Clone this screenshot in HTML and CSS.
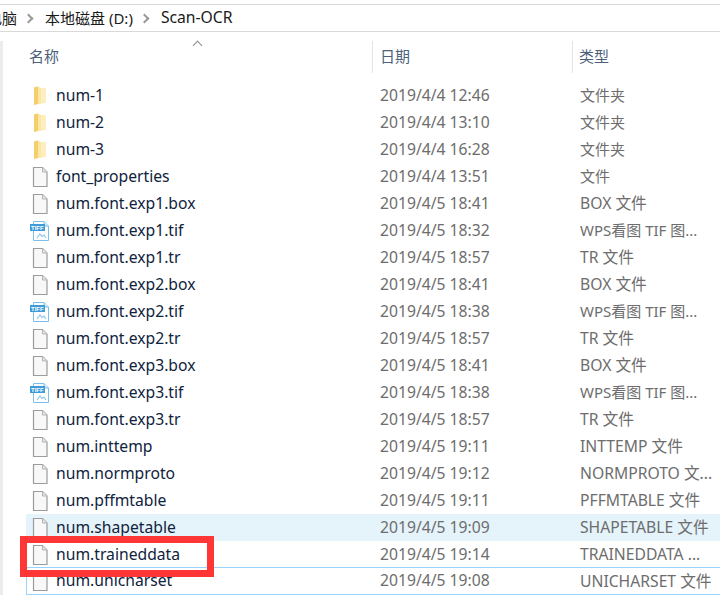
FILE: index.html
```html
<!DOCTYPE html>
<html lang="zh-CN">
<head>
  <meta charset="UTF-8" />
  <title>Scan-OCR</title>
  <link rel="stylesheet" href="styles.css">
</head>
<body>
  <svg class="defs" width="0" height="0">
    <symbol id="folder" viewBox="0 0 16 20">
      <path d="M2 1.5 L6 .5 L9 2 L14 2 L14 16.5 L2 19 Z" fill="#fbe6a6"/>
      <path d="M9 2 L14 2 L14 16.5 L9 16.5 Z" fill="#fdeebf"/>
      <path d="M2 1.5 L6 .5 L6 17.8 L2 19 Z" fill="#f5cd6a"/>
    </symbol>
    <symbol id="file" viewBox="0 0 16 20">
      <path d="M1.5 .5 H10.5 L15 5 V19.5 H1.5 Z" fill="#f8f8f8" stroke="#9c9c9c" stroke-width="1.2"/>
      <path d="M10.5 .5 V5 H15" fill="#e6e6e6" stroke="#b4b4b4"/>
    </symbol>
    <symbol id="tif" viewBox="0 0 20 20">
      <path d="M3.5 .5 H14 L18.5 5 V19.5 H3.5 Z" fill="#fff" stroke="#7cc0ea"/>
      <path d="M14 .5 V5 H18.5" fill="#d7ecfa" stroke="#7cc0ea"/>
      <rect x="0" y="3" width="15" height="7" fill="#3d9bd9"/>
      <text x="1" y="9" class="tif-label">TIFF</text>
      <path d="M7 17 L10 13 L12 15.5 L14 14 L16 17" fill="none" stroke="#8fc6ea" stroke-width="1.2"/>
    </symbol>
  </svg>

  <div class="breadcrumb">
    <span class="crumb crumb-first">电脑</span>
    <span class="chevron"></span>
    <span class="crumb crumb-disk">本地磁盘 (D:)</span>
    <span class="chevron"></span>
    <span class="crumb">Scan-OCR</span>
  </div>

  <div class="pane">
    <div class="columns">
      <div class="col-head col-name">名称<span class="sort"></span></div>
      <div class="col-head col-date">日期</div>
      <div class="col-head col-type">类型</div>
    </div>

    <div class="list">
      <div class="row"><svg class="icon"><use href="#folder"/></svg><span class="name">num-1</span><span class="date">2019/4/4 12:46</span><span class="type type-cjk">文件夹</span></div>
      <div class="row"><svg class="icon"><use href="#folder"/></svg><span class="name">num-2</span><span class="date">2019/4/4 13:10</span><span class="type type-cjk">文件夹</span></div>
      <div class="row"><svg class="icon"><use href="#folder"/></svg><span class="name">num-3</span><span class="date">2019/4/4 16:28</span><span class="type type-cjk">文件夹</span></div>
      <div class="row"><svg class="icon"><use href="#file"/></svg><span class="name">font_properties</span><span class="date">2019/4/4 13:51</span><span class="type type-cjk">文件</span></div>
      <div class="row"><svg class="icon"><use href="#file"/></svg><span class="name">num.font.exp1.box</span><span class="date">2019/4/5 18:41</span><span class="type">BOX 文件</span></div>
      <div class="row"><svg class="icon icon-tif"><use href="#tif"/></svg><span class="name">num.font.exp1.tif</span><span class="date">2019/4/5 18:32</span><span class="type type-cjk">WPS看图 TIF 图...</span></div>
      <div class="row"><svg class="icon"><use href="#file"/></svg><span class="name">num.font.exp1.tr</span><span class="date">2019/4/5 18:57</span><span class="type">TR 文件</span></div>
      <div class="row"><svg class="icon"><use href="#file"/></svg><span class="name">num.font.exp2.box</span><span class="date">2019/4/5 18:41</span><span class="type">BOX 文件</span></div>
      <div class="row"><svg class="icon icon-tif"><use href="#tif"/></svg><span class="name">num.font.exp2.tif</span><span class="date">2019/4/5 18:38</span><span class="type type-cjk">WPS看图 TIF 图...</span></div>
      <div class="row"><svg class="icon"><use href="#file"/></svg><span class="name">num.font.exp2.tr</span><span class="date">2019/4/5 18:57</span><span class="type">TR 文件</span></div>
      <div class="row"><svg class="icon"><use href="#file"/></svg><span class="name">num.font.exp3.box</span><span class="date">2019/4/5 18:41</span><span class="type">BOX 文件</span></div>
      <div class="row"><svg class="icon icon-tif"><use href="#tif"/></svg><span class="name">num.font.exp3.tif</span><span class="date">2019/4/5 18:38</span><span class="type type-cjk">WPS看图 TIF 图...</span></div>
      <div class="row"><svg class="icon"><use href="#file"/></svg><span class="name">num.font.exp3.tr</span><span class="date">2019/4/5 18:57</span><span class="type">TR 文件</span></div>
      <div class="row"><svg class="icon"><use href="#file"/></svg><span class="name">num.inttemp</span><span class="date">2019/4/5 19:11</span><span class="type">INTTEMP 文件</span></div>
      <div class="row"><svg class="icon"><use href="#file"/></svg><span class="name">num.normproto</span><span class="date">2019/4/5 19:12</span><span class="type">NORMPROTO 文...</span></div>
      <div class="row"><svg class="icon"><use href="#file"/></svg><span class="name">num.pffmtable</span><span class="date">2019/4/5 19:11</span><span class="type">PFFMTABLE 文件</span></div>
      <div class="row row-hover"><svg class="icon"><use href="#file"/></svg><span class="name">num.shapetable</span><span class="date">2019/4/5 19:09</span><span class="type">SHAPETABLE 文件</span></div>
      <div class="row"><svg class="icon"><use href="#file"/></svg><span class="name">num.traineddata</span><span class="date">2019/4/5 19:14</span><span class="type">TRAINEDDATA ...</span></div>
      <div class="row row-focus"><svg class="icon"><use href="#file"/></svg><span class="name">num.unicharset</span><span class="date">2019/4/5 19:08</span><span class="type">UNICHARSET 文件</span></div>
    </div>
  </div>

  <div class="highlight-box"></div>
</body>
</html>
```

FILE: styles.css
```css
* {
  box-sizing: border-box;
}
html, body {
  margin: 0;
  height: 602px;
  overflow: hidden;
}
body {
  position: relative;
  background-color: #fff;
  font-family: "Noto Sans", "Noto Sans CJK SC", sans-serif;
  font-size: 15.7px;
  color: #1a1a1a;
  padding-top: 4px;
}
.defs {
  position: absolute;
}
.tif-label {
  font-family: "Liberation Sans", sans-serif;
  font-size: 6px;
  font-weight: bold;
  fill: #fff;
}
.breadcrumb {
  display: flex;
  align-items: center;
  height: 28px;
  border-top: 1px solid #d9d9d9;
  border-bottom: 1px solid #d9d9d9;
}
.crumb {
  position: relative;
  top: -1px;
}
.crumb-first {
  margin-left: -13px;
  font-size: 15px;
}
.crumb-disk {
  font-size: 15px;
}
.chevron {
  width: 7px;
  height: 7px;
  margin: 0 13px 0 8px;
  border-top: 2px solid #9a9a9a;
  border-right: 2px solid #9a9a9a;
  transform: rotate(45deg);
}
.pane {
  margin-top: 9px;
  border-left: 3px solid #ececec;
  padding-left: 23px;
}
.columns {
  display: flex;
  height: 32px;
  color: #4c607a;
  font-size: 15px;
}
.col-head {
  position: relative;
  padding-top: 4px;
}
.col-name {
  width: 346px;
  padding-left: 3px;
}
.col-date {
  width: 200px;
  padding-left: 7px;
  border-left: 1px solid #e3e3e3;
}
.col-type {
  flex: 1;
  padding-left: 6px;
  border-left: 1px solid #e3e3e3;
}
.sort {
  position: absolute;
  left: 168px;
  top: 1px;
  width: 7px;
  height: 7px;
  border-top: 1px solid #8a8a8a;
  border-left: 1px solid #8a8a8a;
  transform: rotate(45deg);
}
.list {
  padding-top: 9px;
}
.row {
  display: flex;
  align-items: center;
  height: 27px;
}
.row > span {
  position: relative;
  top: -1px;
}
.row-hover {
  background-color: #e5f3fb;
}
.row-focus {
  border: 1px solid #99d1ff;
  border-right: none;
  height: 28px;
  margin-top: -1px;
}
.icon {
  width: 16px;
  height: 20px;
  margin-left: 6px;
  flex-shrink: 0;
}
.icon-tif {
  width: 20px;
  margin-left: 4px;
  margin-right: -2px;
}
.row-focus .icon {
  margin-left: 5px;
}
.name {
  width: 332px;
  padding-left: 8px;
  color: #10233d;
}
.date {
  width: 200px;
  color: #6d6d6d;
}
.type {
  color: #6d6d6d;
  white-space: nowrap;
}
.type-cjk {
  font-size: 15px;
}
.highlight-box {
  position: absolute;
  left: 20px;
  top: 536px;
  width: 194px;
  height: 41px;
  border: 7px solid #ff3636;
}
```
